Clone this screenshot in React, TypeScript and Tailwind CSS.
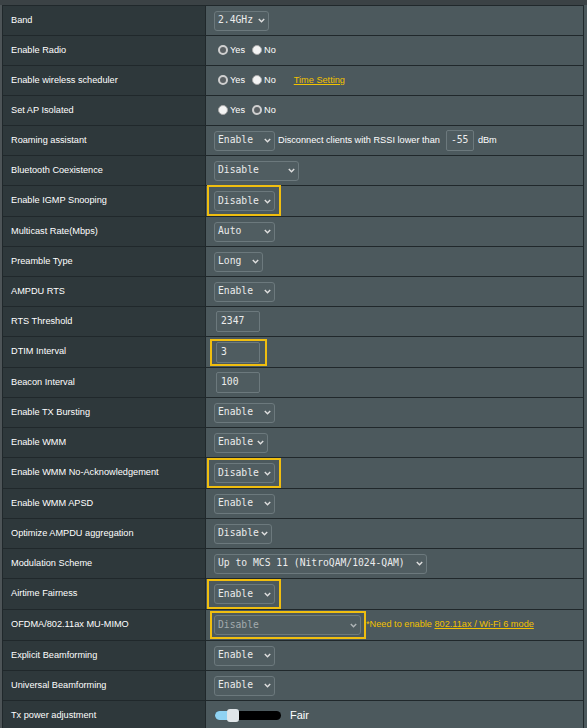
import React from "react";

type RowProps = {
  label: string;
  tall?: boolean;
  children: React.ReactNode;
};

function Row({ label, tall, children }: RowProps) {
  return (
    <div className={`flex border-b border-[#20282b] ${tall ? "h-[31px]" : "h-[30px]"}`}>
      <div className="w-[203px] shrink-0 bg-[#2e383b] border-r border-[#20282b] pl-[8px] flex items-center text-[9.2px] text-white">
        {label}
      </div>
      <div className="flex-1 bg-[#4c595d] pl-[8px] flex items-center">{children}</div>
    </div>
  );
}

function Chevron({ color = "#e0e0e0" }: { color?: string }) {
  return (
    <svg width="7" height="5" viewBox="0 0 7 5" className="shrink-0">
      <path d="M0.8 1 L3.5 3.8 L6.2 1" fill="none" stroke={color} strokeWidth="1.4" />
    </svg>
  );
}

function Select({ value, w, disabled }: { value: string; w: number; disabled?: boolean }) {
  return (
    <div
      className={`h-[20px] flex items-center justify-between pl-[3px] pr-[3px] rounded-[3px] border border-[#6c797d] bg-[#505d61] font-['DejaVu_Sans_Mono',monospace] text-[9.7px] ${
        disabled ? "text-[#a3abae]" : "text-[#ececec]"
      }`}
      style={{ width: w }}
    >
      <span className="whitespace-pre">{value}</span>
      <Chevron color={disabled ? "#b0b6b8" : "#e0e0e0"} />
    </div>
  );
}

function TextBox({ value, w = 44 }: { value: string; w?: number }) {
  return (
    <div
      className="h-[21px] flex items-center pl-[4px] rounded-[2px] border border-[#6c797d] bg-[#4f5c60] font-['DejaVu_Sans_Mono',monospace] text-[9.7px] text-[#ececec]"
      style={{ width: w }}
    >
      {value}
    </div>
  );
}

function Highlight({ children, className }: { children: React.ReactNode; className: string }) {
  return (
    <div className="relative">
      {children}
      <span className={`absolute border-2 border-[#f0be0f] pointer-events-none ${className}`} />
    </div>
  );
}

function Radio({ checked }: { checked: boolean }) {
  return checked ? (
    <span className="block w-[10px] h-[10px] rounded-full border-2 border-[#cfcfcf] bg-[#5b6164] shrink-0" />
  ) : (
    <span className="block w-[10px] h-[10px] rounded-full border border-[#a8a8a8] bg-[#f4f4f4] shrink-0" />
  );
}

function YesNo({ yes, link }: { yes: boolean; link?: string }) {
  return (
    <div className="flex items-center pl-[4px] text-[9.2px] text-white">
      <Radio checked={yes} />
      <span className="ml-[2px]">Yes</span>
      <div className="ml-[7px]">
        <Radio checked={!yes} />
      </div>
      <span className="ml-[2px]">No</span>
      {link && <span className="ml-[18px] text-[#f2c200] underline">{link}</span>}
    </div>
  );
}

export default function App() {
  return (
    <div className="w-[587px] h-[728px] overflow-hidden bg-[#4c595d] font-['Liberation_Sans',Arial,sans-serif]">
      <div className="h-[5px] bg-[#3b4245]" />
      <div className="flex">
        <div className="w-[2px] shrink-0 bg-[#4d5457]" />
        <div className="w-[582px] border-l border-r border-t border-[#20282b]">
          <Row label="Band">
            <Select value="2.4GHz" w={55} />
          </Row>
          <Row label="Enable Radio">
            <YesNo yes />
          </Row>
          <Row label="Enable wireless scheduler">
            <YesNo yes link="Time Setting" />
          </Row>
          <Row label="Set AP Isolated">
            <YesNo yes={false} />
          </Row>
          <Row label="Roaming assistant">
            <Select value="Enable" w={61} />
            <span className="ml-[3px] text-[9.2px] text-white">Disconnect clients with RSSI lower than</span>
            <span className="ml-[6px]">
              <TextBox value="-55" w={28} />
            </span>
            <span className="ml-[4px] text-[9.2px] text-white">dBm</span>
          </Row>
          <Row label="Bluetooth Coexistence">
            <Select value="Disable" w={85} />
          </Row>
          <Row label="Enable IGMP Snooping" tall>
            <Highlight className="-left-[7px] -right-[6px] -top-[6px] -bottom-[5px]">
              <Select value="Disable" w={61} />
            </Highlight>
          </Row>
          <Row label="Multicast Rate(Mbps)">
            <Select value="Auto" w={61} />
          </Row>
          <Row label="Preamble Type">
            <Select value="Long" w={49} />
          </Row>
          <Row label="AMPDU RTS">
            <Select value="Enable" w={61} />
          </Row>
          <Row label="RTS Threshold">
            <span className="ml-[2px]">
              <TextBox value="2347" />
            </span>
          </Row>
          <Row label="DTIM Interval" tall>
            <span className="ml-[2px]">
              <Highlight className="-left-[6px] -right-[7px] -top-[3px] -bottom-[3px]">
                <TextBox value="3" />
              </Highlight>
            </span>
          </Row>
          <Row label="Beacon Interval">
            <span className="ml-[2px]">
              <TextBox value="100" />
            </span>
          </Row>
          <Row label="Enable TX Bursting">
            <Select value="Enable" w={61} />
          </Row>
          <Row label="Enable WMM">
            <Select value="Enable" w={54} />
          </Row>
          <Row label="Enable WMM No-Acknowledgement" tall>
            <Highlight className="-left-[7px] -right-[6px] -top-[5px] -bottom-[5px]">
              <Select value="Disable" w={61} />
            </Highlight>
          </Row>
          <Row label="Enable WMM APSD">
            <Select value="Enable" w={61} />
          </Row>
          <Row label="Optimize AMPDU aggregation">
            <Select value="Disable" w={58} />
          </Row>
          <Row label="Modulation Scheme">
            <Select value="Up to MCS 11 (NitroQAM/1024-QAM)" w={213} />
          </Row>
          <Row label="Airtime Fairness" tall>
            <Highlight className="-left-[7px] -right-[6px] -top-[5px] -bottom-[5px]">
              <Select value="Enable" w={61} />
            </Highlight>
          </Row>
          <Row label="OFDMA/802.11ax MU-MIMO" tall>
            <Highlight className="-left-[4px] -right-[5px] -top-[4px] -bottom-[4px]">
              <Select value="Disable" w={147} disabled />
            </Highlight>
            <span className="ml-[5px] text-[9.2px] text-[#f2c200]">
              *Need to enable <span className="underline">802.11ax / Wi-Fi 6 mode</span>
            </span>
          </Row>
          <Row label="Explicit Beamforming">
            <Select value="Enable" w={61} />
          </Row>
          <Row label="Universal Beamforming">
            <Select value="Enable" w={61} />
          </Row>
          <Row label="Tx power adjustment">
            <div className="relative ml-[1px] w-[66px] h-[9px] rounded-full bg-black">
              <div className="absolute left-0 top-0 h-[9px] w-[18px] rounded-l-full bg-[#8fd2f2]" />
              <div className="absolute left-[12px] -top-[2px] w-[12px] h-[13px] rounded-[3px] bg-[#dfe5e8]" />
            </div>
            <span className="ml-[9px] text-[11px] text-white">Fair</span>
          </Row>
        </div>
      </div>
    </div>
  );
}
